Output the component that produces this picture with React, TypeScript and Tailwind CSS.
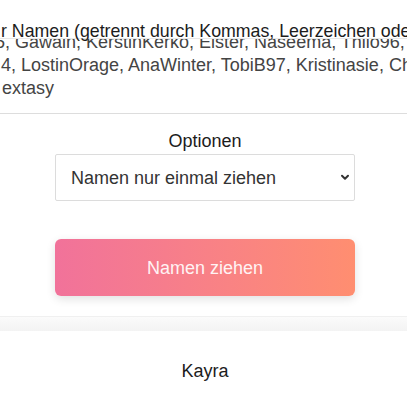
import React from "react";

export default function App() {
  return (
    <div className="w-[407px] h-[407px] overflow-hidden bg-white font-['Liberation_Sans',Arial,sans-serif]">
      <div className="w-[410px]">
        <div className="h-[38px] pt-[23px] pl-[1px] whitespace-nowrap text-[17.75px] leading-[16px] text-[#1c1c1c]">
          r Namen (getrennt durch Kommas, Leerzeichen oder Zeilenumbrüche)
        </div>
        <div className="h-[76px] border-t border-b border-t-[#e8e8e8] border-b-[#dddddd] overflow-hidden">
          <div className="-mt-[8px] text-[18px] leading-[23px] text-[#444] whitespace-nowrap">
            <div className="-ml-[5px]">5, Gawain, KerstinKerko, Elster, Naseema, Thilo96, Mika</div>
            <div className="pl-[1px]">4, LostinOrage, AnaWinter, TobiB97, Kristinasie, Chaos</div>
            <div className="pl-[2px]">extasy</div>
          </div>
        </div>
        <div className="mt-[17px] text-center text-[18px] leading-[20px] text-[#1c1c1c]">Optionen</div>
        <div className="mt-[3px] mx-auto w-[300px] h-[47px] border border-[#dcdcdc] rounded-[2px] flex items-center justify-between pl-[15px] pr-[4px]">
          <span className="text-[18px] leading-[20px] text-[#333]">Namen nur einmal ziehen</span>
          <svg width="10" height="7" viewBox="0 0 10 7">
            <path d="M2 1.8 L5 4.8 L8 1.8" fill="none" stroke="#333" strokeWidth="2" strokeLinecap="round" strokeLinejoin="round" />
          </svg>
        </div>
        <div className="mt-[38px] mx-auto w-[300px] h-[57px] rounded-[6px] bg-gradient-to-r from-[#f1729a] to-[#ff8e70] shadow-[0_3px_10px_rgba(0,0,0,0.12)] flex items-center justify-center">
          <span className="text-[18px] leading-[20px] text-[#fff3f4]">Namen ziehen</span>
        </div>
        <div className="mt-[20px] h-[15px] border-t border-[#f0f0f0] bg-gradient-to-b from-[#fbfbfb] to-[#f3f3f3]" />
        <div className="pt-[30px] text-center text-[18px] leading-[20px] text-[#1c1c1c]">Kayra</div>
      </div>
    </div>
  );
}
